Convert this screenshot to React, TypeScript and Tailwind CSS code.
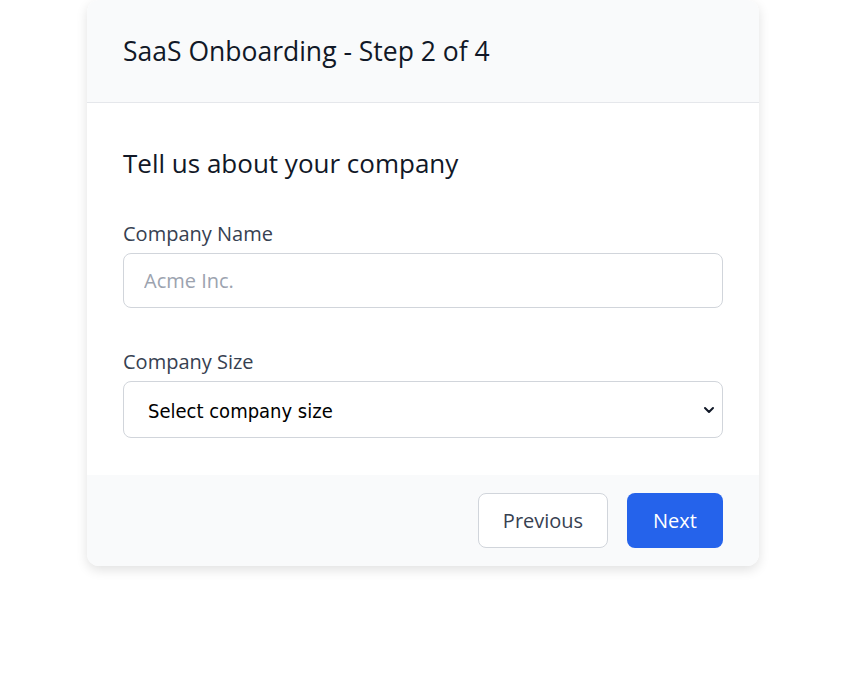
import { useState } from "react";
import { ChevronDown } from "lucide-react";

const sizes = ["1-10 employees", "11-50 employees", "51-200 employees", "201-1000 employees", "1000+ employees"];

export default function App() {
  const [name, setName] = useState("");
  const [size, setSize] = useState("");

  return (
    <div className="min-h-screen bg-white" style={{ fontFamily: '"Open Sans", "Noto Sans", sans-serif' }}>
      <div className="ml-[87px] w-[672px] rounded-xl bg-white shadow-[0_4px_12px_rgba(0,0,0,0.12)] overflow-hidden">
        <div className="h-[103px] flex items-center px-9 bg-[#f9fafb] border-b border-[#e5e7eb]">
          <h1 className="text-[26.5px] text-[#111827] leading-9">SaaS Onboarding - Step 2 of 4</h1>
        </div>

        <div className="px-9 pt-[42px] pb-[37px]">
          <h2 className="text-[26px] leading-9 text-[#111827]">Tell us about your company</h2>

          <div className="mt-[39px]">
            <label className="block text-[20px] leading-[27px] text-[#374151] mb-[6px]">Company Name</label>
            <input
              value={name}
              onChange={(e) => setName(e.target.value)}
              placeholder="Acme Inc."
              className="w-full h-[55px] rounded-lg border border-[#d1d5db] px-5 text-[20px] text-[#111827] placeholder:text-[#9ca3af] outline-none"
            />
          </div>

          <div className="mt-[40px]">
            <label className="block text-[20px] leading-[27px] text-[#374151] mb-[6px]">Company Size</label>
            <div className="relative">
              <select
                value={size}
                onChange={(e) => setSize(e.target.value)}
                className="appearance-none w-full h-[57px] rounded-lg border border-[#d1d5db] bg-white pl-6 pr-10 pt-[2px] text-[20px] text-black outline-none"
                style={{ fontFamily: '"DejaVu Sans", sans-serif', fontStretch: "condensed" }}
              >
                <option value="">Select company size</option>
                {sizes.map((s) => (
                  <option key={s} value={s}>{s}</option>
                ))}
              </select>
              <ChevronDown
                size={16}
                strokeWidth={3}
                className="pointer-events-none absolute right-[6px] top-1/2 -translate-y-1/2 text-[#111827]"
              />
            </div>
          </div>
        </div>

        <div className="h-[91px] flex items-center justify-end gap-[19px] px-9 bg-[#f9fafb]">
          <button className="w-[130px] h-[55px] rounded-lg border border-[#d1d5db] bg-white text-[20px] text-[#374151]">
            Previous
          </button>
          <button className="w-[96px] h-[55px] rounded-lg bg-[#2563eb] text-[20px] text-white">
            Next
          </button>
        </div>
      </div>
    </div>
  );
}
